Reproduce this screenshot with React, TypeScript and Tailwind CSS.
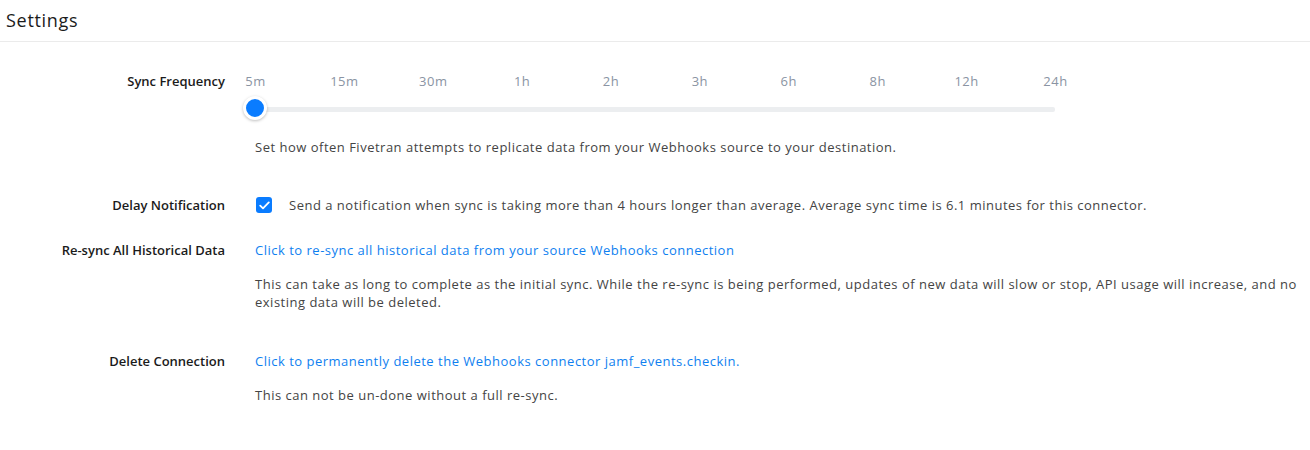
import React from "react";

const ticks = ["5m", "15m", "30m", "1h", "2h", "3h", "6h", "8h", "12h", "24h"];

function Label({ children }: { children: React.ReactNode }) {
  return (
    <div className="w-[225px] shrink-0 text-right text-[13px] leading-[18px] font-semibold text-[#1b1b1b]">
      {children}
    </div>
  );
}

export default function App() {
  return (
    <div className="w-[1310px] h-[450px] bg-white" style={{ fontFamily: "'Open Sans', 'Noto Sans', sans-serif" }}>
      <div className="h-[42px] border-b border-[#ebebeb] px-[6px] flex items-center">
        <span className="text-[18px] tracking-[0.7px] text-[#1b1b1b] leading-none -mt-[2px]">Settings</span>
      </div>

      <div className="pt-[30px]">
        {/* Sync Frequency */}
        <div className="flex gap-[30px]">
          <Label>Sync Frequency</Label>
          <div>
            <div className="flex -ml-[44px] text-[13px] leading-[18px] tracking-[0.5px] text-[#8a94a3]">
              {ticks.map((t) => (
                <div key={t} className="w-[88.9px] text-center">
                  {t}
                </div>
              ))}
            </div>
            <div className="relative mt-[7px] h-[22px] w-[800px] flex items-center">
              <div className="w-full h-[5px] bg-[#eceef0] rounded-[2px] mt-[2px]" />
              <div className="absolute -left-[12px] -top-[1px] w-[24px] h-[24px] rounded-full bg-[#0a7cff] border-[3px] border-white shadow-[0_1px_3px_rgba(0,0,0,0.25)]" />
            </div>
            <div className="mt-[19px] text-[13px] leading-[18px] tracking-[0.5px] text-[#444]">
              Set how often Fivetran attempts to replicate data from your Webhooks source to your destination.
            </div>
          </div>
        </div>

        {/* Delay Notification */}
        <div className="flex gap-[30px] mt-[40px]">
          <Label>Delay Notification</Label>
          <div className="flex items-center gap-[17px]">
            <div className="w-[16px] h-[16px] ml-[1px] rounded-[3px] bg-[#0a7cff] flex items-center justify-center">
              <svg width="11" height="9" viewBox="0 0 11 9" fill="none">
                <path d="M1.2 4.6 L4 7.4 L9.8 1.4" stroke="white" strokeWidth="1.8" strokeLinecap="round" strokeLinejoin="round" />
              </svg>
            </div>
            <div className="text-[13px] leading-[18px] tracking-[0.5px] text-[#444]">
              Send a notification when sync is taking more than 4 hours longer than average. Average sync time is 6.1 minutes for this connector.
            </div>
          </div>
        </div>

        {/* Re-sync */}
        <div className="flex gap-[30px] mt-[27px]">
          <Label>Re-sync All Historical Data</Label>
          <div className="w-[1045px]">
            <div className="text-[13px] leading-[18px] tracking-[0.5px] text-[#0f7ff0]">
              Click to re-sync all historical data from your source Webhooks connection
            </div>
            <div className="mt-[16px] text-[13px] leading-[18px] tracking-[0.5px] text-[#444]">
              This can take as long to complete as the initial sync. While the re-sync is being performed, updates of new data will slow or stop, API usage will increase, and no existing data will be deleted.
            </div>
          </div>
        </div>

        {/* Delete */}
        <div className="flex gap-[30px] mt-[41px]">
          <Label>Delete Connection</Label>
          <div>
            <div className="text-[13px] leading-[18px] tracking-[0.5px] text-[#0f7ff0]">
              Click to permanently delete the Webhooks connector jamf_events.checkin.
            </div>
            <div className="mt-[16px] text-[13px] leading-[18px] tracking-[0.5px] text-[#444]">
              This can not be un-done without a full re-sync.
            </div>
          </div>
        </div>
      </div>
    </div>
  );
}
